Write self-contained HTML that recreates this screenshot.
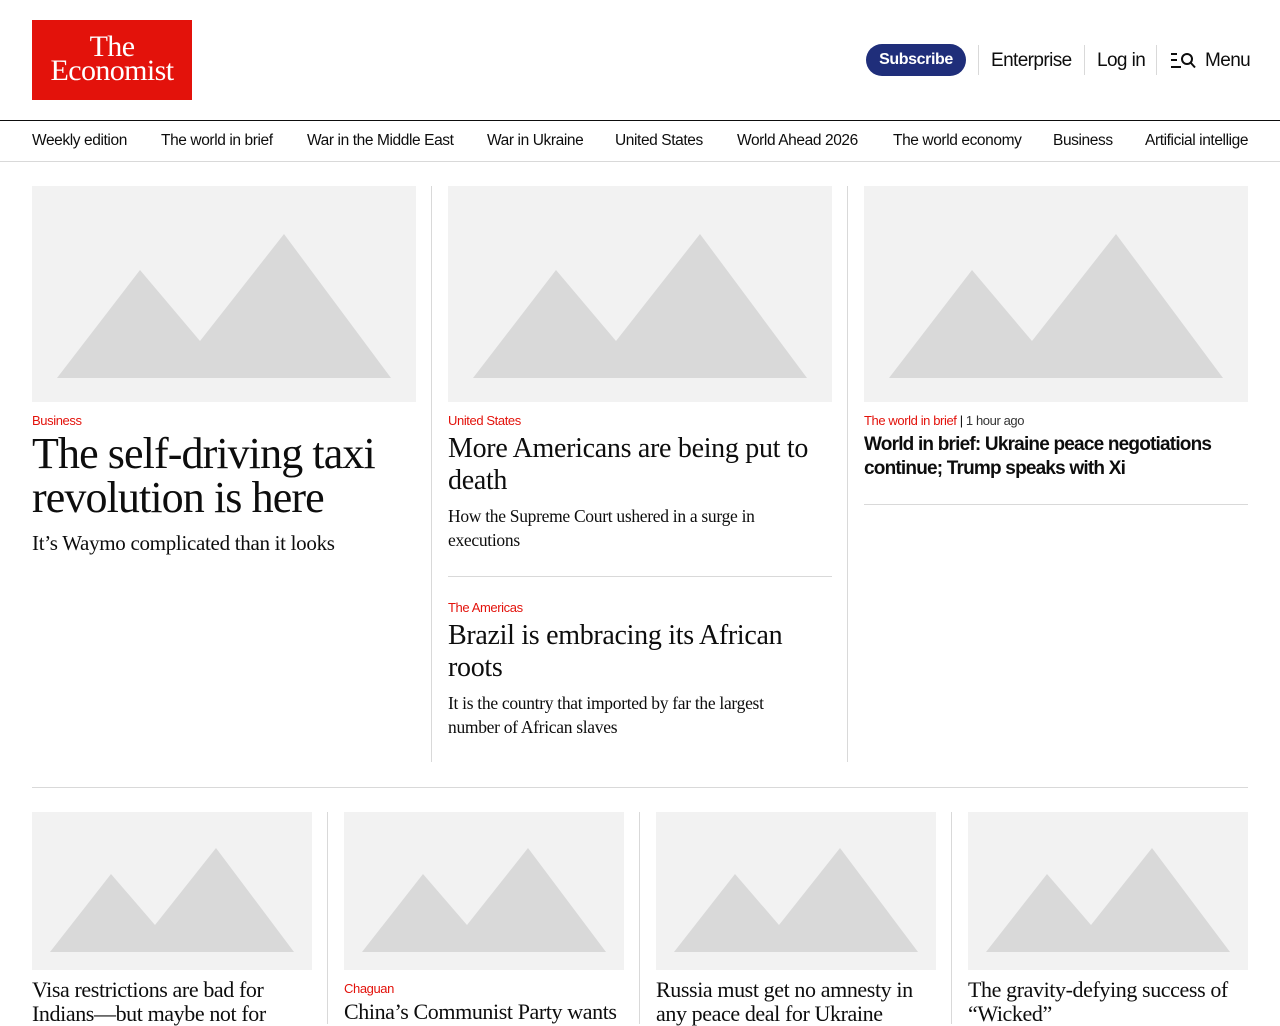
<!DOCTYPE html>
<html><head><meta charset="utf-8"><style>
*{margin:0;padding:0;box-sizing:border-box}
body{width:1280px;height:1024px;overflow:hidden;background:#fff;position:relative;font-family:"Liberation Sans",sans-serif;color:#0d0d0d}
.a{position:absolute}
.s{font-family:"Liberation Sans",sans-serif;letter-spacing:-0.4px}
.serif{font-family:"Liberation Serif",serif;letter-spacing:-0.3px}
.red{color:#e3120b}
.img{position:absolute;background:#f2f2f2}
.img svg{width:100%;height:100%;display:block}
.nav span{position:absolute;top:132px;font-size:15.5px;white-space:nowrap;letter-spacing:-0.4px}
.vl{position:absolute;width:1px;background:#d9d9d9}
.hl{position:absolute;height:1px;background:#d9d9d9}
</style></head><body>
<div class="a" style="left:32px;top:20px;width:160px;height:80px;background:#e3120b;color:#fff;font-family:'Liberation Serif',serif;text-align:center;font-size:30px;line-height:24px;padding-top:15px;letter-spacing:-0.6px">The<br>Economist</div>

<div class="a s" style="left:866px;top:44px;width:100px;height:32px;border-radius:16px;background:#1f2e7a;color:#fff;font-weight:bold;font-size:16px;line-height:32px;text-align:center">Subscribe</div>
<div class="vl" style="left:978px;top:45px;height:30px"></div>
<div class="a s" style="left:991px;top:50px;font-size:19px;letter-spacing:-0.6px">Enterprise</div>
<div class="vl" style="left:1084px;top:45px;height:30px"></div>
<div class="a s" style="left:1097px;top:50px;font-size:19px;letter-spacing:-0.6px">Log in</div>
<div class="vl" style="left:1156px;top:45px;height:30px"></div>
<svg class="a" style="left:1170px;top:50px" width="28" height="20" viewBox="0 0 28 20"><path d="M1 4h6M1 10h6M1 17h10" stroke="#0d0d0d" stroke-width="2"/><circle cx="17" cy="9" r="5" fill="none" stroke="#0d0d0d" stroke-width="2"/><path d="M20.5 12.5l4.5 5" stroke="#0d0d0d" stroke-width="2"/></svg>
<div class="a s" style="left:1205px;top:50px;font-size:19px;letter-spacing:-0.6px">Menu</div>

<div class="a" style="left:0;top:120px;width:1280px;height:1px;background:#0d0d0d"></div>
<div class="nav">
<span style="left:32px">Weekly edition</span>
<span style="left:161px">The world in brief</span>
<span style="left:307px">War in the Middle East</span>
<span style="left:487px">War in Ukraine</span>
<span style="left:615px">United States</span>
<span style="left:737px">World Ahead 2026</span>
<span style="left:893px">The world economy</span>
<span style="left:1053px">Business</span>
<span style="left:1145px;width:103px;overflow:hidden">Artificial intelligence</span>
</div>
<div class="a" style="left:0;top:161px;width:1280px;height:1px;background:#d9d9d9"></div>

<div class="img" style="left:32px;top:186px;width:384px;height:216px"><svg viewBox="0 0 384 216" preserveAspectRatio="none"><path d="M25 192L108 84L168 155L252 48L359 192Z" fill="#d9d9d9"/></svg></div>
<div class="img" style="left:448px;top:186px;width:384px;height:216px"><svg viewBox="0 0 384 216" preserveAspectRatio="none"><path d="M25 192L108 84L168 155L252 48L359 192Z" fill="#d9d9d9"/></svg></div>
<div class="img" style="left:864px;top:186px;width:384px;height:216px"><svg viewBox="0 0 384 216" preserveAspectRatio="none"><path d="M25 192L108 84L168 155L252 48L359 192Z" fill="#d9d9d9"/></svg></div>
<div class="vl" style="left:431px;top:186px;height:576px"></div>
<div class="vl" style="left:847px;top:186px;height:576px"></div>

<div class="a s red" style="left:32px;top:413px;font-size:13px">Business</div>
<div class="a serif" style="left:32px;top:432px;width:384px;font-size:44px;line-height:44px;letter-spacing:-0.9px">The self-driving taxi revolution is here</div>
<div class="a serif" style="left:32px;top:531px;font-size:21px;line-height:24px;white-space:nowrap">It’s Waymo complicated than it looks</div>

<div class="a s red" style="left:448px;top:413px;font-size:13px">United States</div>
<div class="a serif" style="left:448px;top:433px;width:370px;font-size:28px;line-height:32px;letter-spacing:-0.3px">More Americans are being put to death</div>
<div class="a serif" style="left:448px;top:504px;width:340px;font-size:17.5px;line-height:24px">How the Supreme Court ushered in a surge in executions</div>
<div class="hl" style="left:448px;top:576px;width:384px"></div>
<div class="a s red" style="left:448px;top:600px;font-size:13px">The Americas</div>
<div class="a serif" style="left:448px;top:620px;width:340px;font-size:28px;line-height:32px;letter-spacing:-0.3px">Brazil is embracing its African roots</div>
<div class="a serif" style="left:448px;top:691px;width:360px;font-size:17.5px;line-height:24px">It is the country that imported by far the largest number of African slaves</div>

<div class="a s" style="left:864px;top:413px;font-size:13px"><span class="red">The world in brief</span> | <span style="color:#333">1 hour ago</span></div>
<div class="a s" style="left:864px;top:433px;width:384px;font-size:19px;line-height:24px;font-weight:bold;letter-spacing:-0.8px">World in brief: Ukraine peace negotiations continue; Trump speaks with Xi</div>
<div class="hl" style="left:864px;top:504px;width:384px"></div>

<div class="hl" style="left:32px;top:787px;width:1216px"></div>

<div class="img" style="left:32px;top:812px;width:280px;height:158px"><svg viewBox="0 0 280 158" preserveAspectRatio="none"><path d="M18 140L79 62L123 113L184 36L262 140Z" fill="#d9d9d9"/></svg></div>
<div class="img" style="left:344px;top:812px;width:280px;height:158px"><svg viewBox="0 0 280 158" preserveAspectRatio="none"><path d="M18 140L79 62L123 113L184 36L262 140Z" fill="#d9d9d9"/></svg></div>
<div class="img" style="left:656px;top:812px;width:280px;height:158px"><svg viewBox="0 0 280 158" preserveAspectRatio="none"><path d="M18 140L79 62L123 113L184 36L262 140Z" fill="#d9d9d9"/></svg></div>
<div class="img" style="left:968px;top:812px;width:280px;height:158px"><svg viewBox="0 0 280 158" preserveAspectRatio="none"><path d="M18 140L79 62L123 113L184 36L262 140Z" fill="#d9d9d9"/></svg></div>
<div class="vl" style="left:327px;top:812px;height:212px"></div>
<div class="vl" style="left:639px;top:812px;height:212px"></div>
<div class="vl" style="left:951px;top:812px;height:212px"></div>

<div class="a serif" style="left:32px;top:978px;width:260px;font-size:22px;line-height:24px;letter-spacing:-0.4px">Visa restrictions are bad for Indians—but maybe not for</div>
<div class="a s red" style="left:344px;top:981px;font-size:13px">Chaguan</div>
<div class="a serif" style="left:344px;top:1000px;width:290px;font-size:22px;line-height:24px;letter-spacing:-0.4px;white-space:nowrap">China’s Communist Party wants</div>
<div class="a serif" style="left:656px;top:978px;width:268px;font-size:22px;line-height:24px;letter-spacing:-0.4px">Russia must get no amnesty in any peace deal for Ukraine</div>
<div class="a serif" style="left:968px;top:978px;width:275px;font-size:22px;line-height:24px;letter-spacing:-0.4px">The gravity-defying success of “Wicked”</div>
</body></html>
